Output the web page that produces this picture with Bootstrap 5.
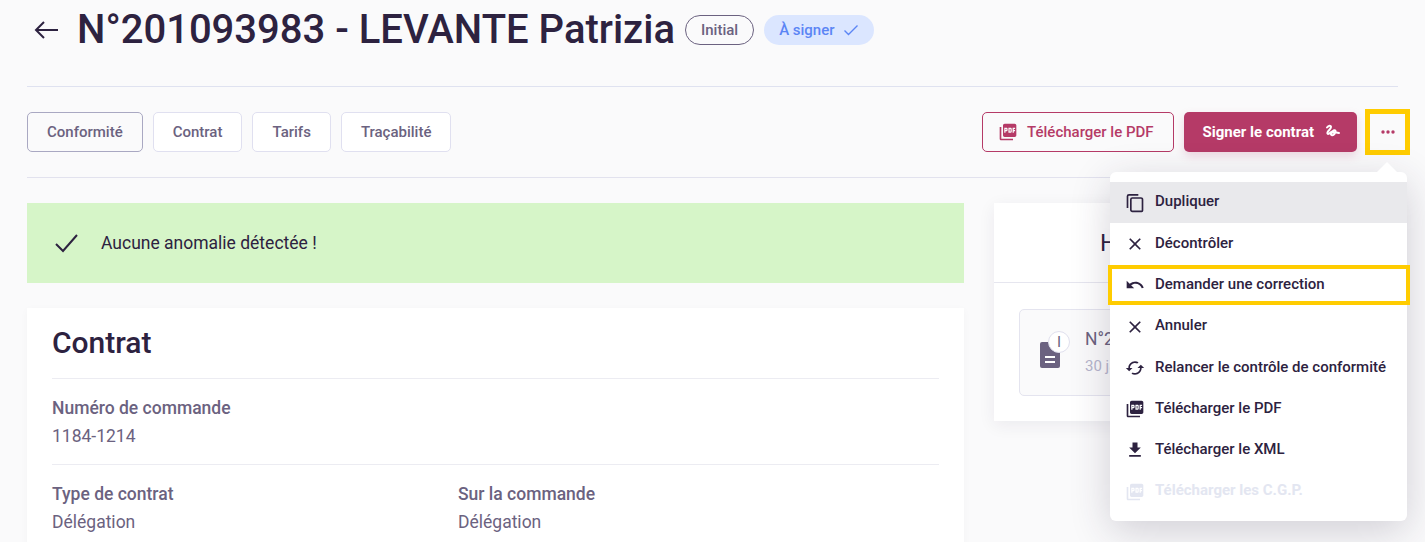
<!DOCTYPE html>
<html lang="fr">
<head>
<meta charset="utf-8">
<title>Contrat</title>
<link href="https://cdn.jsdelivr.net/npm/bootstrap@5.3.0/dist/css/bootstrap.min.css" rel="stylesheet">
<style>
html,body{height:542px;overflow:hidden}
body{background:#fafafb;font-family:Roboto,"Liberation Sans",sans-serif;color:#2d2240}
.page-wrap{padding:0 27px;position:relative;height:542px;overflow:hidden}
.title-row{padding-bottom:26px;border-bottom:1px solid #dfe2f0;box-sizing:content-box;height:60px;align-items:center}
.back-ic{width:26px;height:26px;margin-left:6px;margin-right:18px;color:#2d2240;flex:none}
.page-title{font-size:40px;font-weight:500;margin:0;color:#2d2240;line-height:60px;white-space:nowrap}
.pill{height:30px;border-radius:15px;font-size:15px;font-weight:500;display:inline-flex;align-items:center;padding:0 15px;margin-left:10px;white-space:nowrap}
.pill-initial{border:1px solid #6b6280;color:#6b6280}
.pill-sign{background:#dbe6ff;color:#5b85f5;gap:8px}
.pill-sign svg{width:16px;height:16px}
.action-row{height:91px;border-bottom:1px solid #e2e2ee;align-items:center;justify-content:space-between;position:relative}
.tab-list{gap:10px}
.tab-btn{height:40px;background:#fff;border:1px solid #e0e0f0;border-radius:5px;font-size:15px;font-weight:500;color:#6b6280;padding:0 19px;display:inline-flex;align-items:center}
.tab-btn.is-on{background:transparent;border-color:#a9a8c2}
.pdf-btn,.sign-btn{height:40px;border-radius:5px;font-size:15px;font-weight:500;display:inline-flex;align-items:center}
.pdf-btn{border:1px solid #b53a67;color:#b53a67;background:transparent;padding:0 19px 0 15px;gap:9px;margin-right:10px}
.pdf-btn svg{width:20px;height:20px}
.sign-btn{background:#b53a67;color:#fff;border:0;padding:0 15px 0 19px;gap:10px;box-shadow:0 4px 10px rgba(181,58,103,.18);font-weight:700}
.sign-btn svg{width:18px;height:18px}
.more-wrap{width:45px;height:46px;border:5px solid #ffcc00;margin-left:8px;margin-right:-12px;display:flex;align-items:center;justify-content:center;color:#b53a67;background:#fafafb}
.more-wrap svg{width:14px;height:4px}
.content-row{margin-top:25px;gap:30px;align-items:flex-start}
.main-col{width:937px;flex:none}
.side-col{width:404px;flex:none}
.ok-box{height:80px;background:#d6f5c8;display:flex;align-items:center;padding-left:27px;gap:23px;font-size:17.5px;color:#2d2240;margin-bottom:25px}
.ok-box svg{width:24px;height:24px}
.contract-panel{background:#fff;padding:0 25px;box-shadow:0 2px 8px rgba(45,34,64,.03)}
.contract-title{font-size:30px;font-weight:500;margin:0;line-height:70px;color:#2d2240;border-bottom:1px solid #ececf2;height:71px}
.field-row{border-bottom:1px solid #ececf2;padding:15px 0 14px;display:flex}
.field-cell{width:406px}
.field-name{font-size:17.5px;font-weight:500;color:#6b6280;line-height:28px}
.field-val{font-size:17.5px;color:#6b6280;line-height:28px}
.hist-panel{background:#fff;height:218px;box-shadow:0 4px 16px rgba(45,34,64,.07)}
.hist-head{height:80px;border-bottom:1px solid #e6e6ef;font-size:24px;display:flex;align-items:center;justify-content:center;color:#2d2240;font-weight:400}
.hist-item{margin:26px 25px 0;height:87px;border:1px solid #e4e4ef;border-radius:5px;display:flex;align-items:center;padding-left:20px;gap:25px;background:#fafafb}
.doc-ic{position:relative;width:20px;height:26px;background:#6b6280;border-radius:2px;flex:none;margin-top:4px}
.doc-ic::before,.doc-ic::after{content:"";position:absolute;left:5px;height:2px;background:#fff}
.doc-ic::before{top:14px;width:10px}
.doc-ic::after{top:19px;width:10px}
.doc-mark{position:absolute;left:8px;top:-11px;width:22px;height:22px;border-radius:50%;background:#fff;border:1px solid #e0e0ee;font-size:15px;font-weight:400;text-align:center;line-height:20px;color:#6b6280;z-index:1}
.hist-no{font-size:17.5px;color:#6b6280;line-height:26px}
.hist-date{font-size:15px;color:#b5b5cc;line-height:28px}
.acts-menu.dropdown-menu{display:block;position:absolute;left:1110px;top:172px;width:297px;height:349px;border:0;border-radius:6px;padding:10px 0 0;margin:0;box-shadow:0 10px 40px rgba(45,34,64,.2);z-index:5}
.acts-menu::before{content:"";position:absolute;top:-10px;left:267px;border:10px solid transparent;border-top:0;border-bottom-color:#fff}
.acts-menu .dropdown-item{height:41.3px;display:flex;align-items:center;gap:10px;padding:0 15px 1.5px;font-size:15px;font-weight:500;color:#2d2240;position:relative;line-height:1}
.acts-menu .dropdown-item svg{width:20px;height:20px;flex:none;margin-top:1.5px}
.acts-menu .dropdown-item.is-hover{background:#e9e9ec}
.acts-menu .dropdown-item.disabled{color:#e3e6f1;font-weight:700}
.acts-menu .dropdown-item.is-marked::after{content:"";position:absolute;left:-2px;right:-3px;top:0;height:40px;border:4.5px solid #ffcc00;pointer-events:none}
</style>
</head>
<body>
<svg width="0" height="0" class="d-none">
<symbol id="i-pdf" viewBox="0 0 24 24"><path fill="currentColor" d="M20 2H8c-1.100 0-2 .9-2 2v12c0 1.100.9 2 2 2h12c1.100 0 2-.9 2-2V4c0-1.100-.9-2-2-2zm-8.500 7.500c0 .83-.67 1.500-1.500 1.500H9v2H7.500V7H10c.83 0 1.500.67 1.500 1.500v1zm5 2c0 .83-.67 1.500-1.500 1.500h-2.500V7H15c.83 0 1.500.67 1.500 1.500v3zm4-3H19v1h1.500V11H19v2h-1.500V7h3v1.500zM9 9.500h1v-1H9v1zM4 6H2v14c0 1.100.9 2 2 2h14v-2H4V6zm10 5.500h1v-3h-1v3z"/></symbol>
<symbol id="i-close" viewBox="0 0 24 24"><path fill="currentColor" d="M19 6.410 17.590 5 12 10.590 6.410 5 5 6.410 10.590 12 5 17.590 6.410 19 12 13.410 17.590 19 19 17.590 13.410 12z"/></symbol>
</svg>
<div class="page-wrap">
  <div class="title-row d-flex">
    <svg class="back-ic" viewBox="0 0 26 26" fill="none" stroke="currentColor" stroke-width="2"><path d="M25 13H3M11 5l-8 8 8 8"/></svg>
    <h1 class="page-title">N°201093983 - LEVANTE Patrizia</h1>
    <span class="pill pill-initial">Initial</span>
    <span class="pill pill-sign">À signer <svg viewBox="0 0 16 16" fill="none" stroke="currentColor" stroke-width="1.4"><path d="M1.500 8.500l4 4L14.500 3.500"/></svg></span>
  </div>
  <div class="action-row d-flex">
    <div class="d-flex tab-list">
      <button class="tab-btn is-on" type="button">Conformité</button>
      <button class="tab-btn" type="button">Contrat</button>
      <button class="tab-btn" type="button">Tarifs</button>
      <button class="tab-btn" type="button">Traçabilité</button>
    </div>
    <div class="d-flex align-items-center">
      <button class="pdf-btn" type="button"><svg><use href="#i-pdf"/></svg>Télécharger le PDF</button>
      <button class="sign-btn" type="button">Signer le contrat
        <svg viewBox="0 0 18 18" fill="none" stroke="currentColor" stroke-width="2" stroke-linecap="round" stroke-linejoin="round"><path d="M3 4.500c1.500-2 4-2.300 4-.5 0 2.500-4.500 4.500-3.500 6.500 1 1.500 3.500-1.500 6-3 2-1 3 .8 1 3.500-1.500 2-4 1.300-3.500-.3.500-1.400 3.500-1.700 8-.7"/></svg>
      </button>
      <div class="more-wrap"><svg viewBox="0 0 14 4" fill="currentColor"><circle cx="2" cy="2" r="1.700"/><circle cx="7" cy="2" r="1.700"/><circle cx="12" cy="2" r="1.700"/></svg></div>
    </div>
  </div>
  <div class="content-row d-flex">
    <div class="main-col">
      <div class="ok-box"><svg viewBox="0 0 24 24" fill="none" stroke="currentColor" stroke-width="2"><path d="M2 13l7 7L23 4"/></svg><span>Aucune anomalie détectée !</span></div>
      <div class="contract-panel">
        <h2 class="contract-title">Contrat</h2>
        <div class="field-row"><div class="field-cell"><div class="field-name">Numéro de commande</div><div class="field-val">1184-1214</div></div></div>
        <div class="field-row">
          <div class="field-cell"><div class="field-name">Type de contrat</div><div class="field-val">Délégation</div></div>
          <div class="field-cell"><div class="field-name">Sur la commande</div><div class="field-val">Délégation</div></div>
        </div>
      </div>
    </div>
    <div class="side-col">
      <div class="hist-panel">
        <div class="hist-head">Historique contrat</div>
        <div class="hist-item">
          <div class="doc-ic"><span class="doc-mark">I</span></div>
          <div><div class="hist-no">N°201093983</div><div class="hist-date">30 janvier</div></div>
        </div>
      </div>
    </div>
  </div>
  <div class="dropdown-menu show acts-menu">
    <a class="dropdown-item is-hover" href="#"><svg viewBox="0 0 24 24"><path fill="none" stroke="currentColor" stroke-width="2" d="M3 18V4a1.800 1.800 0 0 1 1.800-1.800H16M8.800 6h10.400A1.800 1.800 0 0 1 21 7.800V21a1 1 0 0 1-1 1H8.800A1.800 1.800 0 0 1 7 20.200V7.800A1.800 1.800 0 0 1 8.800 6z"/></svg>Dupliquer</a>
    <a class="dropdown-item" href="#"><svg><use href="#i-close"/></svg>Décontrôler</a>
    <a class="dropdown-item is-marked" href="#"><svg viewBox="0 0 24 24"><path fill="currentColor" d="M12.500 8c-2.650 0-5.050.99-6.900 2.600L2 7v9h9l-3.620-3.620c1.390-1.160 3.160-1.880 5.120-1.880 3.540 0 6.550 2.310 7.600 5.500l2.370-.78C21.080 11.030 17.150 8 12.500 8z"/></svg>Demander une correction</a>
    <a class="dropdown-item" href="#"><svg><use href="#i-close"/></svg>Annuler</a>
    <a class="dropdown-item" href="#"><svg viewBox="0 0 24 24"><path fill="currentColor" d="M19 8l-4 4h3c0 3.310-2.690 6-6 6-1.010 0-1.970-.25-2.800-.7l-1.460 1.460C8.970 19.540 10.430 20 12 20c4.420 0 8-3.580 8-8h3l-4-4zM6 12c0-3.310 2.690-6 6-6 1.010 0 1.970.25 2.800.7l1.460-1.460C15.030 4.460 13.570 4 12 4c-4.420 0-8 3.580-8 8H1l4 4 4-4H6z"/></svg>Relancer le contrôle de conformité</a>
    <a class="dropdown-item" href="#"><svg><use href="#i-pdf"/></svg>Télécharger le PDF</a>
    <a class="dropdown-item" href="#"><svg viewBox="0 0 24 24"><path fill="currentColor" d="M19 9h-4V3H9v6H5l7 7 7-7zM5 18v2h14v-2H5z"/></svg>Télécharger le XML</a>
    <a class="dropdown-item disabled" href="#"><svg><use href="#i-pdf"/></svg>Télécharger les C.G.P.</a>
  </div>
</div>
<script src="https://cdn.jsdelivr.net/npm/bootstrap@5.3.0/dist/js/bootstrap.bundle.min.js"></script>
</body>
</html>
